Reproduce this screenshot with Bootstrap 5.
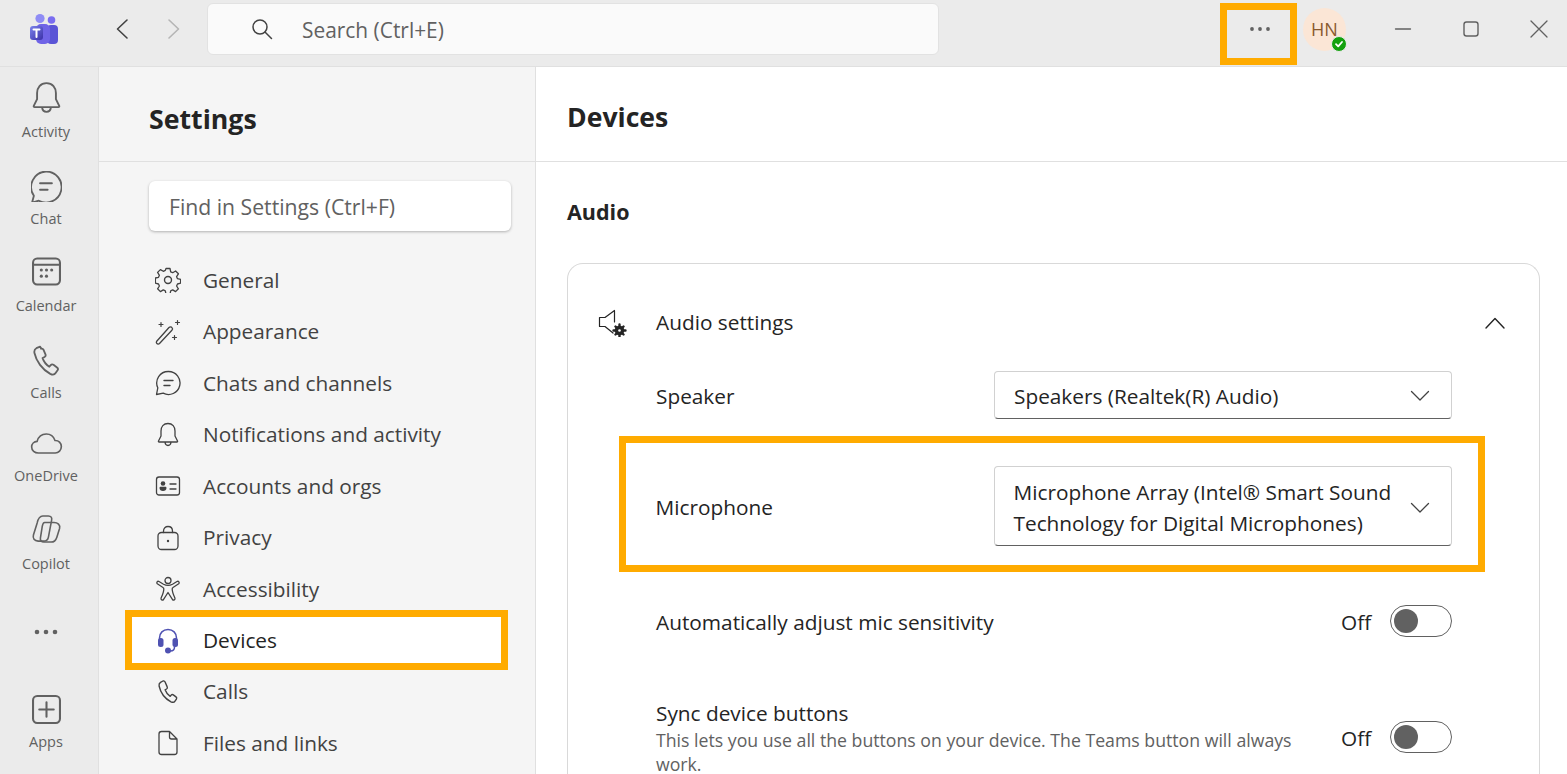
<!doctype html>
<html lang="en"><head><meta charset="utf-8"><title>Teams Settings</title>
<link href="https://cdn.jsdelivr.net/npm/bootstrap@5.3.0/dist/css/bootstrap.min.css" rel="stylesheet">
<style>
html,body{height:100%;overflow:hidden}
body{font-family:"Open Sans","Noto Sans","Liberation Sans",sans-serif;color:#242424;background:#fff;width:1567px;height:774px}
svg{display:block;fill:none;stroke-linecap:round;stroke-linejoin:round;flex:none}
.topbar{height:67px;background:#ebebeb;border-bottom:1px solid #e0e0e0;padding-bottom:9px}
.topbar>*{flex:none}
.logo-slot{width:88px;padding-left:29px}
.navarrows{width:119px;padding-left:27px;gap:36px}
.searchbox{width:732px;height:52px;background:#fafafa;border:1px solid #e2e2e2;border-radius:6px;padding-left:43px;gap:29px;font-size:20.9px;color:#616161}
.searchbox span{padding-top:4px}
.morebox{width:77px;height:62px;border:7px solid #ffab00;margin-left:281px;margin-top:10px;padding-bottom:9px;padding-left:3px}
.avatar-wrap{width:43px;height:43px;margin-left:6px;background:#fbe6d6;border-radius:50%;color:#8a5a2f;font-size:18px;position:relative;margin-top:1px}
.presence{position:absolute;right:-1px;bottom:-1px;width:16px;height:16px;border-radius:50%;background:#13a10e;border:1px solid #ebebeb}
.winbtns{margin-left:23px;width:198px}
.winbtn{width:68px;flex:none}
.winbtn-end{width:56px;padding-right:12px}
.shell{height:707px;overflow:hidden}
.rail{width:99px;flex:none;background:#ebebeb;border-right:1px solid #e0e0e0;padding-top:10px}
.rail-item{color:#616161;font-size:14.5px;line-height:20px;text-align:center;width:92px;height:87.5px;display:flex;flex-direction:column;align-items:center}
.rail-slot{height:45px;display:flex;align-items:center;justify-content:center}
.rail-up{padding-bottom:4px}
.rail-tall{height:46px;padding-bottom:4px}
.rail-short{margin-top:-4px}
.rail-dots{height:92.5px;justify-content:center;padding-bottom:17.5px}
.setpane{width:437px;flex:none;background:#f5f5f5;border-right:1px solid #e0e0e0}
.sethead{height:95px;border-bottom:1px solid #e0e0e0;padding:11px 0 0 50px;font-size:26.7px;font-weight:700;color:#242424}
.findbox{margin:19px 24px 0 50px;height:50px;background:#fff;border-radius:6px;box-shadow:0 1px 3px rgba(0,0,0,.28);padding:2px 0 0 20px;font-size:21.2px;color:#616161}
.setlist{margin-top:23.5px;padding-left:27px}
.setitem{height:51.5px;width:381px;padding-left:29px;gap:22px;font-size:20.8px;color:#424242}
.setitem.is-on{color:#242424;background:#fff;border:7px solid #ffab00;margin-left:-1px;width:383px;padding:1px 0 0 23px;height:60px;margin-top:-5px;margin-bottom:-4px}
.mainpane{width:1031px;flex:none;background:#fff}
.mainhead{height:95px;border-bottom:1px solid #e0e0e0;padding:7px 0 0 31px;font-size:26.6px;font-weight:700}
.audio-h{font-size:21.5px;font-weight:700;margin:36px 0 0 31px;line-height:28px}
.cardbox{margin:37px 27px 0 31px;border:1px solid #d9d9d9;border-radius:16px 16px 0 0;border-bottom:0;height:511px;font-size:20.8px}
.cardtop{height:117px;padding:0 33px 0 30px}
.cardtop-label{margin-left:29px}
.rowline{padding:0 87px 0 88px}
.speaker-row{height:48px;margin-top:-10px}
.lbl{width:338px;flex:none;padding-top:4px}
.dropbox{width:458px;flex:none;border:1px solid #d1d1d1;border-bottom-color:#616161;border-radius:4px;padding:2px 21px 0 19px;line-height:31px}
.drop-one{height:48px}
.drop-two{height:80px;margin-top:3px;padding:4px 21px 0 18.5px}
.mic-box{border:7px solid #ffab00;margin:17px 54px 0 51px;height:136px;padding:0 26px 0 29.5px}
.mic-box .lbl{padding-top:7px;width:338.5px}
.togglerow{padding:0 87px 0 88px}
.row-text{padding-top:3px}
.mic-after{margin-top:33px;height:32px}
.sync-row{margin-top:60px}
.sync-name{padding-top:1px;margin-bottom:-1px}
.sync-tgl{margin-top:23px}
.offtxt{margin-right:17px;width:32px;padding-top:3px}
.tgl{width:62px;height:32px;border:1px solid #616161;border-radius:16px;position:relative;background:#fff;flex:none}
.tgl::before{content:"";position:absolute;left:3px;top:3px;width:24px;height:24px;border-radius:50%;background:#616161}
.smalltxt{font-size:17.7px;line-height:24px;color:#616161;width:650px}
</style></head>
<body>
<div class="topbar d-flex align-items-center">
 <div class="logo-slot">
  <svg width="30" height="32" viewBox="0 0 30 32"><defs><linearGradient id="g1" x1="0" y1="0" x2="1" y2="1"><stop offset="0" stop-color="#7b83eb"/><stop offset="1" stop-color="#3b2fa8"/></linearGradient></defs>
  <circle cx="11" cy="5.5" r="4.6" fill="#8f8cf5"/><circle cx="22.5" cy="7" r="3.8" fill="#7a6df0"/>
  <rect x="18" y="12" width="11" height="19" rx="4" fill="#5a54d6"/><rect x="7" y="11" width="14" height="20" rx="5" fill="#6f63e6"/>
  <rect x="1" y="13" width="13" height="14" rx="3" fill="url(#g1)"/><path d="M4.5 16.5h6M7.5 16.5v7.5" stroke="#fff" stroke-width="2"/></svg>
 </div>
 <div class="navarrows d-flex align-items-center">
  <svg width="15" height="24" viewBox="0 0 15 24"><path d="M12 3 2.500 12 12 21" stroke="#424242" stroke-width="1.600"/></svg>
  <svg width="15" height="24" viewBox="0 0 15 24"><path d="M3 3l9.500 9L3 21" stroke="#b5b5b5" stroke-width="1.600"/></svg>
 </div>
 <div class="searchbox d-flex align-items-center">
  <svg width="22" height="22" viewBox="0 0 22 22"><circle cx="9" cy="9" r="7" stroke="#424242" stroke-width="1.500"/><path d="M14 14l6.500 6.500" stroke="#424242" stroke-width="1.500"/></svg>
  <span>Search (Ctrl+E)</span>
 </div>
 <div class="morebox d-flex align-items-center justify-content-center">
  <svg width="22" height="6" viewBox="0 0 22 6"><circle cx="3" cy="3" r="1.900" fill="#616161"/><circle cx="11" cy="3" r="1.900" fill="#616161"/><circle cx="19" cy="3" r="1.900" fill="#616161"/></svg>
 </div>
 <div class="avatar-wrap d-flex align-items-center justify-content-center">HN
  <span class="presence d-flex align-items-center justify-content-center"><svg width="10" height="10" viewBox="0 0 10 10"><path d="M2 5.200 4.200 7.400 8 3" stroke="#fff" stroke-width="1.800"/></svg></span>
 </div>
 <div class="winbtns d-flex align-items-center">
  <div class="winbtn d-flex justify-content-center"><svg width="18" height="4" viewBox="0 0 18 4"><path d="M1.500 2h15" stroke="#616161" stroke-width="1.300"/></svg></div>
  <div class="winbtn d-flex justify-content-center"><svg width="18" height="18" viewBox="0 0 18 18"><rect x="2" y="2" width="14" height="14" rx="2.500" stroke="#616161" stroke-width="1.400"/></svg></div>
  <div class="winbtn winbtn-end d-flex justify-content-end"><svg width="20" height="20" viewBox="0 0 20 20"><path d="M2 2l16 16M18 2 2 18" stroke="#616161" stroke-width="1.300"/></svg></div>
 </div>
</div>
<div class="shell d-flex">
 <div class="rail d-flex flex-column">
  <div class="rail-item"><div class="rail-slot rail-up"><svg width="29" height="31" viewBox="3 2 26 28"><path d="M16 3c-5.500 0-8.500 4-8.500 9v5.500L4.500 23.500c-.3.700.1 1.200.8 1.200h21.400c.7 0 1.100-.5.800-1.200l-3-6V12c0-5-3-9-8.500-9ZM12 25c.3 2.500 2 4 4 4s3.700-1.500 4-4" stroke="#616161" stroke-width="1.700"/></svg></div>Activity</div>
  <div class="rail-item"><div class="rail-slot"><svg width="31" height="31" viewBox="2 1 29 29"><path d="M16 1.500a14.500 14.500 0 1 1-6.700 27.300l-6.300 1.700 1.700-6.300A14.500 14.500 0 0 1 16 1.500Z" stroke="#616161" stroke-width="1.700"/><path d="M10.500 12.500h11M10.500 18.500h7" stroke="#616161" stroke-width="1.900"/></svg></div>Chat</div>
  <div class="rail-item"><div class="rail-slot rail-up"><svg width="29" height="29" viewBox="2 2 28 27"><rect x="3" y="3" width="26" height="25" rx="4" stroke="#616161" stroke-width="2"/><path d="M3 9h26" stroke="#616161" stroke-width="2"/><g fill="#616161"><circle cx="11" cy="14" r="1.500"/><circle cx="16" cy="14" r="1.500"/><circle cx="21" cy="14" r="1.500"/><circle cx="11" cy="20" r="1.500"/><circle cx="16" cy="20" r="1.500"/></g></svg></div>Calendar</div>
  <div class="rail-item"><div class="rail-slot"><svg width="26" height="31" viewBox="3 1 24 29"><path d="M9.500 2.500 6 4c-1.500.8-2.200 2.500-1.800 4.500C5.800 16 11.500 24 19 28c2 1 4 .8 5-.8l1.800-2.500c.7-1 .4-2-.5-2.700l-3.300-2.500c-.9-.6-1.900-.5-2.600.3l-1.300 1.500c-3-1.800-5.200-4.800-6.300-8l1.800-1c1-.6 1.300-1.600.9-2.600l-1.700-4c-.5-1-1.400-1.500-2.300-1.200Z" stroke="#616161" stroke-width="1.700"/></svg></div>Calls</div>
  <div class="rail-item rail-short"><div class="rail-slot"><svg width="33" height="21" viewBox="1 3.500 30 20.500"><path d="M8 23c-3.500 0-6.500-2.400-6.500-5.800 0-3 2.400-5.300 5.300-5.500C8 7.500 11.500 4.500 15.800 4.500c4 0 7.200 2.500 8.500 6.300 3.500-.2 6.200 2.500 6.200 6 0 3.500-2.700 6.200-6 6.200H8Z" stroke="#616161" stroke-width="1.600"/></svg></div>OneDrive</div>
  <div class="rail-item"><div class="rail-slot rail-tall"><svg width="31" height="28" viewBox="2 1 30 30"><path d="M13 2h6c3 0 4 2 3.500 4.500L19 25c-.5 2.500-2.500 4-5 4H8c-4 0-6-3-5-6.500L7 9.500C8 5 10 2 13 2Z" stroke="#616161" stroke-width="1.700"/><path d="M15 9h10c4 0 7 2.500 6 6.500L28 25c-1 3-3 5-6 5h-8c-2.500 0-4-2-3.500-4.500L12.500 13C13 10.500 13.500 9 15 9Z" stroke="#616161" stroke-width="1.700"/></svg></div>Copilot</div>
  <div class="rail-item rail-dots"><svg width="26" height="6" viewBox="0 0 26 6"><circle cx="4" cy="3" r="2.300" fill="#616161"/><circle cx="13" cy="3" r="2.300" fill="#616161"/><circle cx="22" cy="3" r="2.300" fill="#616161"/></svg></div>
  <div class="rail-item"><div class="rail-slot"><svg width="29" height="29" viewBox="2 2 28 28"><rect x="3" y="3" width="26" height="26" rx="4" stroke="#616161" stroke-width="2"/><path d="M16 9v14M9 16h14" stroke="#616161" stroke-width="2"/></svg></div>Apps</div>
 </div>
 <div class="setpane">
  <div class="sethead d-flex align-items-center">Settings</div>
  <div class="findbox d-flex align-items-center">Find in Settings (Ctrl+F)</div>
  <div class="setlist">
   <div class="setitem d-flex align-items-center"><svg width="26" height="26" viewBox="0 0 26 26"><path d="M11 1.500h4l.7 3.300 2 .9 2.900-1.700 2.800 2.800-1.800 2.900.9 2 3.100.7v3.800l-3.100.8-.9 2 1.800 2.800-2.800 2.800-2.900-1.700-2 .9-.7 3.200h-4l-.7-3.200-2-.9-2.900 1.700-2.800-2.800 1.800-2.800-.9-2-3.100-.8V11l3.100-.7.900-2-1.800-2.900 2.800-2.800 2.900 1.700 2-.9Z" stroke="#424242" stroke-width="1.300"/><circle cx="13" cy="13" r="3.500" stroke="#424242" stroke-width="1.400"/></svg>General</div>
   <div class="setitem d-flex align-items-center"><svg width="26" height="26" viewBox="0 0 26 26"><path d="M1.500 22.500 14 8.500c.8-.8 2.300-.8 3 .1.700.8.600 2-.1 2.700L4.500 24.500c-.8.800-2 .7-2.600 0-.6-.6-.7-1.400-.4-2Z" stroke="#424242" stroke-width="1.300"/><path d="M6 3.500v4M4 5.500h4M22.500 1.500v4M20.500 3.500h4M19.500 16.500v4M17.500 18.500h4" stroke="#424242" stroke-width="1.200"/></svg>Appearance</div>
   <div class="setitem d-flex align-items-center"><svg width="26" height="26" viewBox="0 0 26 26"><path d="M13.500 1.500a11.500 11.500 0 1 1-5.300 21.700L1.500 24.500l1.300-6.700A11.500 11.500 0 0 1 13.500 1.500Z" stroke="#424242" stroke-width="1.300"/><path d="M9 10.500h9M9 15.500h6" stroke="#424242" stroke-width="1.400"/></svg>Chats and channels</div>
   <div class="setitem d-flex align-items-center"><svg width="26" height="26" viewBox="0 0 26 26"><path d="M13 1.500c-4.500 0-7 3.300-7 7.500v5L3.500 19c-.3.600 0 1 .6 1h17.800c.6 0 .9-.4.600-1L20 14V9c0-4.200-2.500-7.500-7-7.500ZM10 20.300c.2 2 1.500 3.200 3 3.200s2.800-1.200 3-3.200" stroke="#424242" stroke-width="1.300"/></svg>Notifications and activity</div>
   <div class="setitem d-flex align-items-center"><svg width="26" height="26" viewBox="0 0 26 26"><rect x="1.500" y="4" width="23" height="18" rx="2.500" stroke="#424242" stroke-width="1.300"/><circle cx="8" cy="10.500" r="2.300" fill="#424242"/><path d="M4.500 15c0-.8.500-1.200 1.200-1.200h4.600c.7 0 1.200.4 1.200 1.200 0 2-1.500 3-3.500 3s-3.500-1-3.500-3Z" fill="#424242"/><path d="M15 11h6M15 16h6" stroke="#424242" stroke-width="1.300"/></svg>Accounts and orgs</div>
   <div class="setitem d-flex align-items-center"><svg width="26" height="26" viewBox="0 0 26 26"><rect x="3" y="7.500" width="20" height="17" rx="3.500" stroke="#424242" stroke-width="1.300"/><path d="M8.500 7.500V6c0-2.800 2-4.500 4.500-4.500s4.500 1.700 4.500 4.500v1.500" stroke="#424242" stroke-width="1.300"/><circle cx="13" cy="16" r="1.200" fill="#424242"/></svg>Privacy</div>
   <div class="setitem d-flex align-items-center"><svg width="26" height="26" viewBox="0 0 26 26"><circle cx="13" cy="4.500" r="3" stroke="#424242" stroke-width="1.300"/><path d="M4 5.500c-1.500-.8-3 1-1.700 2.300L8 11.500c.5.300.8.800.8 1.500 0 3-1.300 6-2.700 9-.7 1.700 1.500 3 2.500 1.300L13 16.500l4.400 6.800c1 1.700 3.200.4 2.500-1.300-1.400-3-2.700-6-2.700-9 0-.7.300-1.200.8-1.500l5.700-3.700c1.300-1.300-.2-3.100-1.700-2.300l-4.500 2.700c-2.800 1.500-6.200 1.500-9 0Z" stroke="#424242" stroke-width="1.300"/></svg>Accessibility</div>
   <div class="setitem is-on d-flex align-items-center"><svg width="26" height="26" viewBox="0 0 26 26"><path d="M4.500 12V10C4.500 5 8 1.500 13 1.500S21.500 5 21.500 10v2M19.500 19c0 2.500-1.500 4-4 4H14" stroke="#4f52b2" stroke-width="1.500"/><rect x="3" y="10" width="5.500" height="9" rx="2.500" fill="#4f52b2"/><rect x="17.500" y="10" width="5.500" height="9" rx="2.500" fill="#4f52b2"/><circle cx="13" cy="22.500" r="3" fill="#4f52b2"/></svg>Devices</div>
   <div class="setitem d-flex align-items-center"><svg width="26" height="26" viewBox="0 0 26 26"><path d="M8 2 5.500 3.300C4.300 4 3.800 5.300 4.100 7c1.300 6 5.700 12.500 11.900 15.800 1.600.8 3.200.6 4-.7l1.400-2c.6-.8.300-1.600-.4-2.200l-2.700-2c-.7-.5-1.500-.4-2.100.2l-1 1.200c-2.500-1.500-4.200-3.900-5.100-6.500l1.400-.8c.8-.5 1.100-1.300.7-2.100L10.100 3C9.700 2.100 8.900 1.700 8 2Z" stroke="#424242" stroke-width="1.400"/></svg>Calls</div>
   <div class="setitem d-flex align-items-center"><svg width="26" height="26" viewBox="0 0 26 26"><path d="M14.500 1.500H6.500c-1.500 0-2.500 1-2.500 2.500v18c0 1.500 1 2.500 2.500 2.500h13c1.500 0 2.500-1 2.500-2.500V9l-7.500-7.500ZM14.500 1.500V7c0 1.300.7 2 2 2H22" stroke="#424242" stroke-width="1.300"/></svg>Files and links</div>
  </div>
 </div>
 <div class="mainpane">
  <div class="mainhead d-flex align-items-center">Devices</div>
  <div class="audio-h">Audio</div>
  <div class="cardbox">
   <div class="cardtop d-flex align-items-center">
    <svg width="29" height="28" viewBox="0 0 29 28"><path d="M16.500 1.500 7 8.500H1.500v9H7l8 6.500M16.500 1.500V13" stroke="#242424" stroke-width="1.200"/><path d="M21.500 15.500v12M15.500 21.500h12M17.500 17.500l8 8M25.500 17.500l-8 8" stroke="#242424" stroke-width="2.400"/><circle cx="21.500" cy="21.500" r="4.800" fill="#242424"/><circle cx="21.500" cy="21.500" r="1.300" fill="#fff"/></svg>
    <span class="cardtop-label flex-grow-1">Audio settings</span>
    <svg width="22" height="14" viewBox="0 0 22 14"><path d="M2 12 11 2.500 20 12" stroke="#242424" stroke-width="1.400"/></svg>
   </div>
   <div class="rowline speaker-row d-flex align-items-center">
    <span class="lbl">Speaker</span>
    <div class="dropbox drop-one d-flex align-items-center justify-content-between"><span>Speakers (Realtek(R) Audio)</span><svg width="20" height="12" viewBox="0 0 20 12"><path d="M1.500 1.500 10 10l8.500-8.500" stroke="#424242" stroke-width="1.300"/></svg></div>
   </div>
   <div class="mic-box d-flex align-items-center">
    <span class="lbl">Microphone</span>
    <div class="dropbox drop-two d-flex align-items-center justify-content-between"><span>Microphone Array (Intel® Smart Sound<br>Technology for Digital Microphones)</span><svg width="20" height="12" viewBox="0 0 20 12"><path d="M1.500 1.500 10 10l8.500-8.500" stroke="#424242" stroke-width="1.300"/></svg></div>
   </div>
   <div class="togglerow d-flex align-items-center justify-content-between mic-after">
    <span class="row-text">Automatically adjust mic sensitivity</span>
    <div class="d-flex align-items-center"><span class="offtxt">Off</span><span class="tgl"></span></div>
   </div>
   <div class="togglerow d-flex align-items-start justify-content-between sync-row">
    <div><div class="sync-name">Sync device buttons</div><div class="smalltxt">This lets you use all the buttons on your device. The Teams button will always work.</div></div>
    <div class="d-flex align-items-center sync-tgl"><span class="offtxt">Off</span><span class="tgl"></span></div>
   </div>
  </div>
 </div>
</div>
</body></html>
